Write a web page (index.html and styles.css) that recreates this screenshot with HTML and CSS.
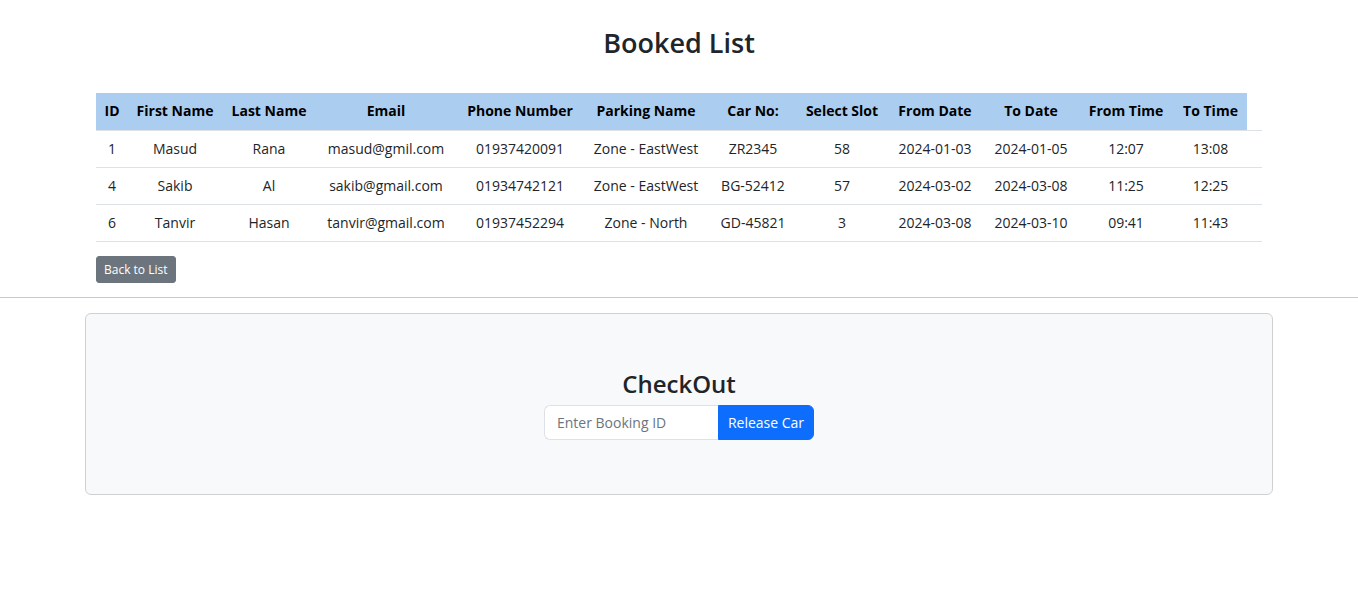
FILE: index.html
```html
<!DOCTYPE html>
<html lang="en">
<head>
<meta charset="utf-8">
<title>Booked List</title>
<link rel="stylesheet" href="styles.css">
</head>
<body>
<main class="page">
  <section class="booked">
    <h3 class="title">Booked List</h3>
    <table class="table">
      <colgroup>
        <col style="width:32px"><col style="width:94px"><col style="width:94px"><col style="width:140px">
        <col style="width:128px"><col style="width:124px"><col style="width:90px"><col style="width:88px">
        <col style="width:98px"><col style="width:94px"><col style="width:96px"><col style="width:73px">
        <col>
      </colgroup>
      <thead>
        <tr>
          <th class="hd">ID</th><th class="hd">First Name</th><th class="hd">Last Name</th><th class="hd">Email</th>
          <th class="hd">Phone Number</th><th class="hd">Parking Name</th><th class="hd">Car No:</th><th class="hd">Select Slot</th>
          <th class="hd">From Date</th><th class="hd">To Date</th><th class="hd">From Time</th><th class="hd">To Time</th><th></th>
        </tr>
      </thead>
      <tbody>
        <tr>
          <td>1</td><td>Masud</td><td>Rana</td><td>masud@gmil.com</td><td>01937420091</td><td>Zone - EastWest</td>
          <td>ZR2345</td><td>58</td><td>2024-01-03</td><td>2024-01-05</td><td>12:07</td><td>13:08</td><td></td>
        </tr>
        <tr>
          <td>4</td><td>Sakib</td><td>Al</td><td>sakib@gmail.com</td><td>01934742121</td><td>Zone - EastWest</td>
          <td>BG-52412</td><td>57</td><td>2024-03-02</td><td>2024-03-08</td><td>11:25</td><td>12:25</td><td></td>
        </tr>
        <tr>
          <td>6</td><td>Tanvir</td><td>Hasan</td><td>tanvir@gmail.com</td><td>01937452294</td><td>Zone - North</td>
          <td>GD-45821</td><td>3</td><td>2024-03-08</td><td>2024-03-10</td><td>09:41</td><td>11:43</td><td></td>
        </tr>
      </tbody>
    </table>
    <a class="btn-back" href="#">Back to List</a>
  </section>
  <hr class="rule">
  <section class="checkout">
    <h4 class="co-title">CheckOut</h4>
    <form class="input-group">
      <input class="form-control" type="text" placeholder="Enter Booking ID">
      <button class="btn-release" type="button">Release Car</button>
    </form>
  </section>
</main>
</body>
</html>
```
FILE: styles.css
```css
* { box-sizing: border-box; }
html, body { margin: 0; padding: 0; background: #fff; }
body {
  font-family: "Open Sans", "Noto Sans", sans-serif;
  font-size: 14px;
  line-height: 1.5;
  color: #212529;
}
.page { padding-top: 26px; }
.booked { padding: 0 96px; }
.title {
  margin: 0 0 33px;
  text-align: center;
  font-size: 27px;
  font-weight: 600;
  line-height: 34px;
  color: #212529;
}
.table {
  width: 100%;
  table-layout: fixed;
  border-collapse: collapse;
  margin-bottom: 14px;
}
.table th, .table td {
  padding: 8px 0;
  height: 37px;
  line-height: 20px;
  text-align: center;
  white-space: nowrap;
  border-bottom: 1px solid #dee2e6;
  vertical-align: middle;
}
.table th { font-weight: 700; color: #000; }
.table th.hd { background: #abcdef; }
.table td { color: #212529; }
.btn-back {
  display: inline-block;
  padding: 4px 7px;
  font-size: 12px;
  line-height: 17px;
  color: #fff;
  background: #6c757d;
  border: 1px solid #6c757d;
  border-radius: 3px;
  text-decoration: none;
  vertical-align: top;
}
.rule {
  margin: 14px 0 15px;
  border: 0;
  border-top: 1px solid #c8c9ca;
}
.checkout {
  margin: 0 85px;
  padding: 55px 0 54px;
  background: #f8f9fa;
  border: 1px solid #cfd0d1;
  border-radius: 6px;
  display: flex;
  flex-direction: column;
  align-items: center;
}
.co-title {
  margin: 0 0 7px;
  font-size: 24px;
  font-weight: 600;
  line-height: 29px;
  color: #212529;
}
.input-group { display: flex; margin: 0; }
.form-control {
  width: 174px;
  height: 35px;
  padding: 6px 12px;
  font-family: inherit;
  font-size: 14px;
  color: #212529;
  background: #fff;
  border: 1px solid #dee2e6;
  border-right: 0;
  border-radius: 6px 0 0 6px;
  outline: none;
}
.form-control::placeholder { color: #6c757d; }
.btn-release {
  height: 35px;
  width: 96px;
  padding: 6px 0;
  font-family: inherit;
  font-size: 14px;
  color: #fff;
  background: #0d6efd;
  border: 1px solid #0d6efd;
  border-radius: 0 6px 6px 0;
  cursor: pointer;
}
```
